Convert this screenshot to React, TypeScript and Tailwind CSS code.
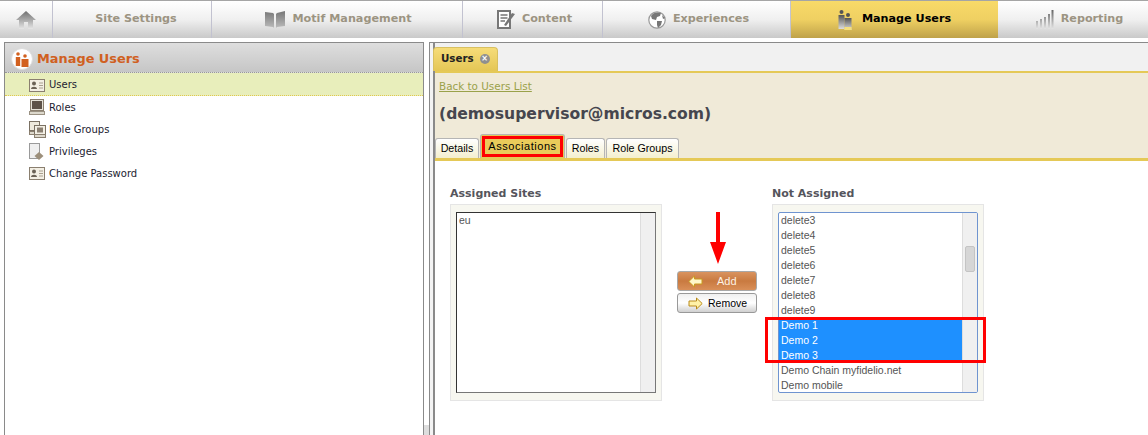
import React from "react";

const dejavu = "font-['DejaVu_Sans',sans-serif]";
const arial = "font-['Liberation_Sans',Arial,sans-serif]";

const HomeIcon = () => (
  <svg width="22" height="20" viewBox="0 0 22 20">
    <defs>
      <linearGradient id="homeGrad" x1="0" y1="0" x2="0" y2="1">
        <stop offset="0" stopColor="#6f6f6f" />
        <stop offset="1" stopColor="#e6e6e6" />
      </linearGradient>
    </defs>
    <path d="M11 1 L21 10 L18 10 L18 19 L13 19 L13 12 L9 12 L9 19 L4 19 L4 10 L1 10 Z" fill="url(#homeGrad)" />
  </svg>
);

const BookIcon = () => (
  <svg width="20" height="17" viewBox="0 0 20 17">
    <defs>
      <linearGradient id="bookGrad" x1="0" y1="0" x2="0" y2="1">
        <stop offset="0" stopColor="#777" />
        <stop offset="1" stopColor="#bbb" />
      </linearGradient>
    </defs>
    <path d="M0 1 L8 2 L9 3 L9 17 L8 16 L0 15 Z M11 3 L12 2 L20 0 L20 15 L12 16 L11 17 Z" fill="url(#bookGrad)" />
  </svg>
);

const ContentIcon = () => (
  <svg width="18" height="19" viewBox="0 0 18 19">
    <rect x="1" y="1" width="12" height="17" fill="#fff" stroke="#777" strokeWidth="2" />
    <path d="M3.5 5 H10.5 M3.5 8 H10.5 M3.5 11 H8" stroke="#777" strokeWidth="1.4" />
    <path d="M7 15 L15 3 L18 4 L9 16 Z" fill="#777" />
  </svg>
);

const GlobeIcon = () => (
  <svg width="18" height="18" viewBox="0 0 18 18">
    <circle cx="9" cy="9" r="8.2" fill="#fff" stroke="#999" strokeWidth="1.2" />
    <path d="M3 5 C5 1 10 1 13 2 L12 5 L9 6 L8 9 L4 8 Z M9 10 L14 10 L13 14 L10 17 L9 14 Z M14 4 L17 7 L15 8 Z" fill="#777" />
  </svg>
);

const UsersTabIcon = () => (
  <svg width="14" height="20" viewBox="0 0 14 20">
    <defs>
      <linearGradient id="usrGrad" x1="0" y1="0" x2="0" y2="1">
        <stop offset="0" stopColor="#555" />
        <stop offset="1" stopColor="#ddd" />
      </linearGradient>
    </defs>
    <circle cx="3.5" cy="2" r="2" fill="#555" />
    <rect x="0.5" y="5" width="6" height="14" fill="url(#usrGrad)" />
    <circle cx="10" cy="5" r="2" fill="#555" />
    <rect x="6.5" y="8" width="7" height="12" fill="url(#usrGrad)" />
    <rect x="6.5" y="17" width="7" height="3" fill="#f5df7c" />
  </svg>
);

const ChartIcon = () => (
  <svg width="18" height="19" viewBox="0 0 18 19">
    <defs>
      <linearGradient id="chartGrad" x1="0" y1="0" x2="0" y2="1">
        <stop offset="0" stopColor="#666" />
        <stop offset="1" stopColor="#e4e4e4" />
      </linearGradient>
    </defs>
    <path d="M0 11 h2 v8 h-2 Z M4 9 h2 v10 h-2 Z M8 7 h2 v12 h-2 Z M12 4 h2 v15 h-2 Z M15.5 0 h2 v19 h-2 Z" fill="url(#chartGrad)" />
  </svg>
);

const CardIcon = () => (
  <svg width="16" height="14" viewBox="0 0 16 14">
    <rect x="0.5" y="1.5" width="15" height="12" fill="#f3efe4" stroke="#8a7f6f" />
    <circle cx="5" cy="5.5" r="2" fill="#6b6256" />
    <path d="M2 11 C2 8 8 8 8 11 Z" fill="#6b6256" />
    <path d="M10 5 H14 M10 7.5 H14 M10 10 H14" stroke="#a9a090" />
  </svg>
);

const MonitorIcon = () => (
  <svg width="16" height="16" viewBox="0 0 16 16">
    <rect x="1.5" y="0.5" width="13" height="11" fill="#e6e2d8" stroke="#8a7f6f" />
    <rect x="3" y="2" width="10" height="8" fill="#5e5248" />
    <rect x="0.5" y="12.5" width="15" height="3" fill="#dcd8cc" stroke="#9a9182" />
  </svg>
);

const GroupIcon = () => (
  <svg width="17" height="17" viewBox="0 0 17 17">
    <rect x="0.5" y="0.5" width="10" height="9" fill="#eee9dc" stroke="#7b7163" />
    <rect x="0.5" y="10.5" width="10" height="3" fill="#ddd8cc" stroke="#8a7f6f" />
    <rect x="5.5" y="4.5" width="11" height="9" fill="#f3efe4" stroke="#7b7163" />
    <rect x="8" y="6.5" width="6" height="5" fill="#8b8072" />
    <rect x="5.5" y="13.5" width="11" height="3" fill="#ddd8cc" stroke="#8a7f6f" />
  </svg>
);

const PrivilegeIcon = () => (
  <svg width="15" height="17" viewBox="0 0 15 17">
    <rect x="0.5" y="0.5" width="10" height="15" fill="#efefef" stroke="#9a9a9a" />
    <path d="M10 9 L14.5 13 L10 17 L5.5 13 Z" fill="#9c8f7b" />
  </svg>
);

const BrandIcon = () => (
  <svg width="22" height="22" viewBox="0 0 22 22">
    <circle cx="11" cy="11" r="10.5" fill="#fff" stroke="#ddd" />
    <circle cx="7" cy="6" r="1.8" fill="#d2601f" />
    <rect x="4.8" y="9" width="4.4" height="9" fill="#d2601f" />
    <circle cx="14" cy="8" r="1.8" fill="#d2601f" />
    <rect x="10.5" y="11" width="7" height="8" fill="#d2601f" />
  </svg>
);

const ArrowLeft = () => (
  <svg width="15" height="13" viewBox="0 0 15 13">
    <path d="M0.8 6.5 L6.5 1 V4 H14 V9 H6.5 V12 Z" fill="#fff7c8" stroke="#c99a1f" />
  </svg>
);

const ArrowRight = () => (
  <svg width="15" height="13" viewBox="0 0 15 13">
    <path d="M14.2 6.5 L8.5 1 V4 H1 V9 H8.5 V12 Z" fill="#fff2a8" stroke="#b98a1a" />
  </svg>
);

const navTabs = [
  { label: "Site Settings", width: "w-[159px] pl-[8px]", icon: null },
  { label: "Motif Management", width: "w-[251px] pl-[3px]", icon: <BookIcon /> },
  { label: "Content", width: "w-[140px] pl-[4px]", icon: <ContentIcon /> },
  { label: "Experiences", width: "w-[188px] pl-[4px]", icon: <GlobeIcon /> },
];

const menu = [
  { label: "Users", icon: <CardIcon />, active: true },
  { label: "Roles", icon: <MonitorIcon />, active: false },
  { label: "Role Groups", icon: <GroupIcon />, active: false },
  { label: "Privileges", icon: <PrivilegeIcon />, active: false },
  { label: "Change Password", icon: <CardIcon />, active: false },
];

const sites = ["delete3", "delete4", "delete5", "delete6", "delete7", "delete8", "delete9"];
const selectedSites = ["Demo 1", "Demo 2", "Demo 3"];

const SubTab: React.FC<{ label: string; width: string }> = ({ label, width }) => (
  <div className={`${width} h-[20px] flex items-center justify-center rounded-t-[3px] border border-b-0 border-[#b5b5b5] bg-gradient-to-b from-white to-[#f4efce] text-[10.7px] text-black ${arial}`}>
    {label}
  </div>
);

const App: React.FC = () => {
  return (
    <div className={`w-[1148px] h-[435px] overflow-hidden bg-white flex flex-col ${dejavu}`}>
      {/* top navigation */}
      <div className="h-[38px] flex border-t border-[#a5a5a5] bg-gradient-to-b from-white via-[#f0f0f0] to-[#c9c9c9] shrink-0">
        <div className="w-[53px] flex items-center justify-center border-r border-[#c2c2d0]">
          <HomeIcon />
        </div>
        {navTabs.map((tab) => (
          <div
            key={tab.label}
            className={`${tab.width} flex items-center justify-center gap-[7px] border-r border-[#c2c2d0] text-[11.2px] font-bold text-[#9c9482]`}
          >
            {tab.icon}
            <span>{tab.label}</span>
          </div>
        ))}
        <div className="w-[207px] flex items-center justify-center gap-[10px] bg-gradient-to-b from-[#f8da68] via-[#efd062] to-[#bfa24a] text-[11.2px] font-bold text-black">
          <UsersTabIcon />
          <span>Manage Users</span>
        </div>
        <div className="flex-1 flex items-center justify-center gap-[7px] pl-[13px] text-[11.2px] font-bold text-[#9c9482]">
          <ChartIcon />
          <span>Reporting</span>
        </div>
      </div>

      <div className="flex-1 flex pt-[4px] pl-[4px] min-h-0">
        {/* left panel */}
        <div className="w-[420px] shrink-0 border-l border-r border-t border-[#8a8a8a]">
          <div className="h-[30px] flex items-center gap-[4px] pl-[6px] pt-[2px] bg-gradient-to-b from-[#dedede] to-[#c6c6c6] border-b border-dotted border-[#999]">
            <BrandIcon />
            <span className="text-[12.9px] font-bold text-[#d0601f]">Manage Users</span>
          </div>
          <div className="flex flex-col">
            {menu.map((item) => (
              <div
                key={item.label}
                className={`flex items-center pl-[24px] text-[10px] text-[#1c1c30] ${
                  item.active ? "bg-[#e8eebb] border-b border-dotted border-[#e0c850] h-[23px] pt-[1px]" : "h-[22px]"
                }`}
              >
                <span className="w-[20px] flex justify-start">{item.icon}</span>
                <span>{item.label}</span>
              </div>
            ))}
          </div>
        </div>

        {/* splitter */}
        <div className="w-[5px] shrink-0 relative">
          <div className="absolute left-0 bottom-0 h-[10px] w-[5px] bg-[#ddd]" />
        </div>
        <div className="w-[4px] shrink-0 border-l border-t border-[#8a8a8a] bg-[#f3f3f3]" />

        {/* right panel */}
        <div className="flex-1 border-t border-l-2 border-[#8a8a8a] flex flex-col min-w-0">
          <div className="h-[28px] flex items-end bg-[#f1f1f1] shrink-0">
            <div className="w-[65px] h-[24px] -ml-[2px] flex items-center gap-[6px] pl-[7px] pb-[2px] rounded-t-[4px] border border-b-0 border-[#d8c060] bg-gradient-to-b from-[#f6dc78] to-[#e4c655] text-[10.3px] font-bold text-[#222]">
              <span>Users</span>
              <span className="w-[10px] h-[10px] rounded-full bg-[#8f8f8f] flex items-center justify-center text-[8px] leading-none text-white">
                ×
              </span>
            </div>
          </div>
          <div className="bg-[#f0ead8] border-t-[2px] border-b-[3px] border-[#e5c957] h-[90px] shrink-0 flex flex-col">
            <a className="mt-[6px] ml-[4px] text-[10.4px] text-[#9aa14a] underline">Back to Users List</a>
            <div className="mt-[9px] ml-[4px] text-[15.6px] leading-[20px] font-bold text-[#46464e]">
              (demosupervisor@micros.com)
            </div>
            <div className="flex items-end gap-[1px] mt-auto relative">
              <SubTab label="Details" width="w-[44px]" />
              <div className="w-[85px] h-[24px] p-[1px] rounded-t-[3px] border border-b-0 border-[#b5b5b5] bg-[#e5c957]">
                <div className={`h-full border-[3px] border-[#ff0000] flex items-center justify-center text-[11px] tracking-[0.55px] text-black bg-[#eacb5a] ${arial}`}>
                  Associations
                </div>
              </div>
              <SubTab label="Roles" width="w-[39px]" />
              <SubTab label="Role Groups" width="w-[73px]" />
            </div>
          </div>

          {/* associations */}
          <div className="flex items-start pt-[26px] pl-[15px]">
            <div className="w-[212px]">
              <div className="text-[11px] leading-[13px] font-bold text-[#55555c] mb-[4px]">Assigned Sites</div>
              <div className="h-[197px] px-[5px] py-[7px] bg-[#f7f7f0] border border-[#e5e5e5]">
                <div className={`h-full flex border border-[#777] border-t-[#333] border-l-[#333] bg-white text-[10.5px] text-[#555] ${arial}`}>
                  <div className="flex-1 pl-[2px] leading-[15px]">eu</div>
                  <div className="w-[15px] bg-[#f0f0f0] border-l border-[#ddd]" />
                </div>
              </div>
            </div>

            <div className="w-[110px] pl-[15px] pt-[25px] flex flex-col items-stretch">
              <svg className="self-start ml-[33px]" width="16" height="52" viewBox="0 0 16 52">
                <path d="M6 0 H10 V30 H16 L8 52 L0 30 H6 Z" fill="#ff0000" />
              </svg>
              <div className={`mt-[7px] w-[80px] h-[20px] flex items-center pl-[10px] pt-[1px] gap-[14px] rounded-[3px] border border-[#a8a8a8] bg-gradient-to-b from-[#d9935f] via-[#c97a40] to-[#d98f58] text-[11px] text-[#fdf2e4] ${arial}`}>
                <ArrowLeft />
                <span>Add</span>
              </div>
              <div className={`mt-[2px] w-[80px] h-[20px] flex items-center pl-[10px] pt-[1px] gap-[5px] rounded-[3px] border border-[#999] bg-gradient-to-b from-[#f0f0f0] via-white to-[#d0d0d0] text-[10.5px] text-black ${arial}`}>
                <ArrowRight />
                <span>Remove</span>
              </div>
            </div>

            <div className="w-[212px]">
              <div className="text-[11px] leading-[13px] font-bold text-[#55555c] mb-[4px]">Not Assigned</div>
              <div className="h-[197px] px-[5px] py-[7px] bg-[#f7f7f0] border border-[#e5e5e5] relative">
                <div className={`h-full flex rounded-[2px] border border-[#6f94d0] bg-white text-[10.5px] leading-[15px] text-[#555] overflow-hidden ${arial}`}>
                  <div className="flex-1">
                    {sites.map((s) => (
                      <div key={s} className="pl-[2px] h-[15px]">{s}</div>
                    ))}
                    {selectedSites.map((s) => (
                      <div key={s} className="pl-[2px] h-[15px] bg-[#1e90ff] text-white">{s}</div>
                    ))}
                    <div className="pl-[2px] h-[15px]">Demo Chain myfidelio.net</div>
                    <div className="pl-[2px] h-[15px]">Demo mobile</div>
                  </div>
                  <div className="w-[15px] bg-[#f0f0f0] border-l border-[#ddd] pt-[33px] pl-[2px]">
                    <div className="w-[10px] h-[26px] rounded-[2px] border border-[#c4c4c4] bg-[#d6d6d6]" />
                  </div>
                </div>
                {/* annotation over the selected rows */}
                <div className="absolute left-[-8px] top-[112px] w-[221px] h-[46px] border-[3px] border-[#ff0000]" />
              </div>
            </div>
          </div>
        </div>
      </div>
    </div>
  );
};

export default App;
